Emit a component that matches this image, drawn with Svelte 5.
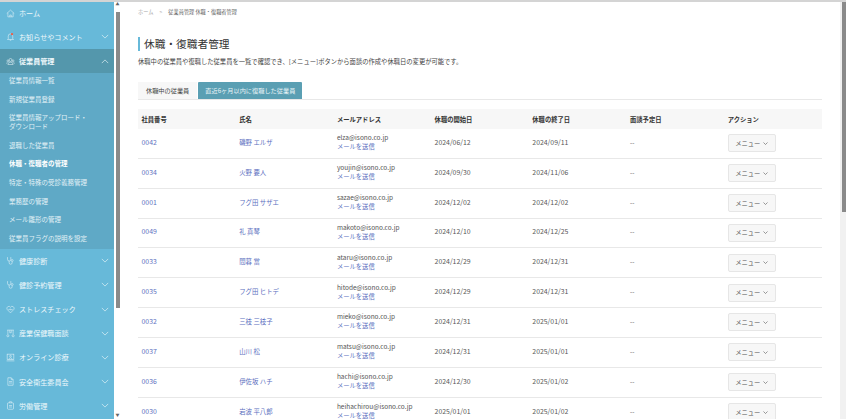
<script lang="ts">
  const topItems = [
    { label: "ホーム", icon: "home", chevron: false },
    { label: "お知らせやコメント", icon: "bell", chevron: true },
  ];
  const subItems = [
    { label: "従業員情報一覧" },
    { label: "新規従業員登録" },
    { label: "従業員情報アップロード・ダウンロード", wrap: true },
    { label: "退職した従業員" },
    { label: "休職・復職者の管理", active: true },
    { label: "特定・特殊の受診義務管理" },
    { label: "業務歴の管理" },
    { label: "メール雛形の管理" },
    { label: "従業員フラグの説明を設定" },
  ];
  const bottomItems = [
    { label: "健康診断", icon: "steth" },
    { label: "健診予約管理", icon: "steth" },
    { label: "ストレスチェック", icon: "heart" },
    { label: "産業保健職面談", icon: "people" },
    { label: "オンライン診療", icon: "screen" },
    { label: "安全衛生委員会", icon: "doc" },
    { label: "労働管理", icon: "clip" },
  ];
  const rows = [
    ["0042", "磯野 エルザ", "elza@isono.co.jp", "2024/06/12", "2024/09/11"],
    ["0034", "火野 要人", "youjin@isono.co.jp", "2024/09/30", "2024/11/06"],
    ["0001", "フグ田 サザエ", "sazae@isono.co.jp", "2024/12/02", "2024/12/02"],
    ["0049", "礼 真琴", "makoto@isono.co.jp", "2024/12/10", "2024/12/25"],
    ["0033", "間暮 當", "ataru@isono.co.jp", "2024/12/29", "2024/12/31"],
    ["0035", "フグ田 ヒトデ", "hitode@isono.co.jp", "2024/12/29", "2024/12/31"],
    ["0032", "三枝 三枝子", "mieko@isono.co.jp", "2024/12/31", "2025/01/01"],
    ["0037", "山川 松", "matsu@isono.co.jp", "2024/12/31", "2025/01/01"],
    ["0036", "伊佐坂 ハチ", "hachi@isono.co.jp", "2024/12/30", "2025/01/02"],
    ["0030", "岩波 平八郎", "heihachirou@isono.co.jp", "2025/01/01", "2025/01/02"],
  ];
  const heads = ["社員番号", "氏名", "メールアドレス", "休職の開始日", "休職の終了日", "面談予定日", "アクション"];
</script>

{#snippet icon(name)}
  <svg class="ico" viewBox="0 0 12 12" fill="none" stroke="currentColor" stroke-width="0.7">
    {#if name === "home"}
      <path d="M1 6 6 1.5 11 6M2.5 5v5.5h7V5M5 10.5V8h2v2.5" />
    {:else if name === "bell"}
      <path d="M3 9V5.5a3 3 0 0 1 6 0V9l1 1H2zM5 11h2" />
      <circle cx="8" cy="2.8" r="1.6" fill="#e8604c" stroke="none" />
    {:else if name === "group"}
      <circle cx="6" cy="4" r="2" /><circle cx="2.6" cy="5.2" r="1.3" /><circle cx="9.4" cy="5.2" r="1.3" />
      <path d="M2.5 10a3.5 3 0 0 1 7 0zM1 9a2 2 0 0 1 .8-2M11 9a2 2 0 0 0-.8-2" />
    {:else if name === "steth"}
      <path d="M2 1.5v3a2.2 2.2 0 0 0 4.4 0v-3M4.2 6.8V9a2 2 0 0 0 4 0V7.5" /><circle cx="8.2" cy="6" r="1.3" />
    {:else if name === "heart"}
      <path d="M6 10.5 1.6 6a2.6 2.6 0 0 1 4.4-3 2.6 2.6 0 0 1 4.4 3zM3.2 6h1.5l.8-1 1 2 .7-1h1.6" />
    {:else if name === "people"}
      <path d="M1.5 1.5h9M2.5 1.5V7M9.5 1.5V7M5 1.5V5h2V1.5" /><circle cx="2.5" cy="9" r="1.4" /><circle cx="9.5" cy="9" r="1.4" />
    {:else if name === "screen"}
      <rect x="1.5" y="1.5" width="9" height="7" /><circle cx="6" cy="4.3" r="1.2" /><path d="M4 8.5a2 2 0 0 1 4 0M.8 10.5h10.4" />
    {:else if name === "doc"}
      <path d="M2.5 1h4.5L9.5 3.5V11h-7zM7 1v2.5h2.5M4 6h4M4 8h4" />
    {:else}
      <rect x="2" y="2.5" width="8" height="8.5" rx="1" /><path d="M4.5 2.5V1h3v1.5M4 6h4M4 8h4" />
    {/if}
  </svg>
{/snippet}

{#snippet chev(up)}
  <svg class="chev" viewBox="0 0 10 6" fill="none" stroke="currentColor" stroke-width="0.8">
    <path d={up ? "M1 5 5 1l4 4" : "M1 1l4 4 4-4"} />
  </svg>
{/snippet}

<div class="page">
  <aside class="sidebar">
    {#each topItems as item}
      <div class="nav">
        {@render icon(item.icon)}
        <span class="nav-label">{item.label}</span>
        {#if item.chevron}{@render chev(false)}{/if}
      </div>
    {/each}
    <div class="nav open">
      {@render icon("group")}
      <span class="nav-label">従業員管理</span>
      {@render chev(true)}
    </div>
    <div class="subs">
      {#each subItems as sub}
        <div class="sub" class:wrap={sub.wrap} class:active={sub.active}>{sub.label}</div>
      {/each}
    </div>
    {#each bottomItems as item}
      <div class="nav low">
        {@render icon(item.icon)}
        <span class="nav-label">{item.label}</span>
        {@render chev(false)}
      </div>
    {/each}
  </aside>

  <div class="scrollbar side-bar">
    <span class="arrow">▲</span>
    <div class="thumb side-thumb"></div>
    <span class="arrow bottom">▼</span>
  </div>

  <main class="main">
    <nav class="crumbs">
      <span class="crumb-home">ホーム</span>
      <span class="crumb-sep">&gt;</span>
      <span>従業員管理 休職・復職者管理</span>
    </nav>
    <h1>休職・復職者管理</h1>
    <p class="lead">休職中の従業員や復職した従業員を一覧で確認でき、[メニュー]ボタンから面談の作成や休職日の変更が可能です。</p>

    <div class="tabs">
      <div class="tab">休職中の従業員</div>
      <div class="tab current">直近6ヶ月以内に復職した従業員</div>
    </div>

    <table>
      <thead>
        <tr>
          {#each heads as h}<th>{h}</th>{/each}
        </tr>
      </thead>
      <tbody>
        {#each rows as r}
          <tr>
            <td class="link num">{r[0]}</td>
            <td class="link">{r[1]}</td>
            <td class="mail">{r[2]}<br /><span class="link">メールを送信</span></td>
            <td class="num">{r[3]}</td>
            <td class="num">{r[4]}</td>
            <td>--</td>
            <td class="act"><button>メニュー <svg viewBox="0 0 10 6" fill="none" stroke="currentColor" stroke-width="1.2"><path d="M1 1l4 4 4-4" /></svg></button></td>
          </tr>
        {/each}
      </tbody>
    </table>
  </main>

  <div class="scrollbar page-bar">
    <div class="thumb page-thumb"></div>
  </div>
</div>

<style>
  :global(body) {
    margin: 0;
    background: #fff;
  }
  .page {
    display: flex;
    height: 419px;
    overflow: hidden;
    font-family: "Noto Sans CJK JP", "Liberation Sans", sans-serif;
    color: #444;
    border-top: 2px solid #d4d4d4;
    box-sizing: border-box;
  }
  .sidebar {
    width: 114px;
    flex: none;
    background: #67b9d9;
    color: #eef8fb;
    overflow: hidden;
  }
  .nav {
    height: 24.5px;
    display: flex;
    align-items: center;
    padding: 0 5px 0 5.5px;
    font-size: 7.1px;
  }
  .nav:first-child {
    height: 22.5px;
  }
  .nav.low {
    height: 24.2px;
  }
  .nav-label {
    flex: 1;
    margin-left: 4.5px;
  }
  .ico {
    width: 9px;
    height: 9px;
    flex: none;
  }
  .chev {
    width: 8px;
    height: 5px;
    flex: none;
  }
  .open {
    height: 24px;
    background: #5497ac;
    font-weight: 700;
  }
  .subs {
    background: #5fa9c6;
    padding: 0 9px;
    font-size: 6.5px;
    color: #e2f1f6;
  }
  .sub {
    height: 18.7px;
    line-height: 15.5px;
    white-space: nowrap;
  }
  .sub:last-child {
    height: 17.5px;
  }
  .sub.wrap {
    height: 27.3px;
    line-height: 9px;
    padding: 3.1px 16px 0 0;
    box-sizing: border-box;
    white-space: normal;
  }
  .sub.active {
    font-weight: 700;
    color: #fff;
  }
  .scrollbar {
    flex: none;
    background: #f1f1f1;
    position: relative;
  }
  .side-bar {
    width: 7px;
    margin-top: -2px;
    background: #fff;
    display: flex;
    flex-direction: column;
    align-items: center;
  }
  .arrow {
    font-size: 4px;
    line-height: 8px;
    height: 8px;
    color: #666;
  }
  .arrow.bottom {
    margin-top: auto;
  }
  .thumb {
    background: #8a8a8a;
  }
  .side-thumb {
    width: 4px;
    height: 296px;
    margin-top: 4px;
  }
  .page-bar {
    width: 6px;
    margin: -2px 0 0 auto;
  }
  .page-thumb {
    width: 4px;
    height: 212px;
    margin-left: 2px;
  }
  .main {
    width: 684px;
    flex: none;
    margin-left: 17px;
  }
  .crumbs {
    font-size: 5.2px;
    line-height: 8px;
    margin-top: 6px;
    color: #666;
    display: flex;
    gap: 6px;
  }
  .crumb-home,
  .crumb-sep {
    color: #aaa;
  }
  h1 {
    margin: 21px 0 0;
    padding-left: 4px;
    border-left: 2px solid #67b9d9;
    font-size: 10.7px;
    font-weight: 400;
    line-height: 14px;
    color: #333;
  }
  .lead {
    margin: 5px 0 0;
    font-size: 6.3px;
    line-height: 12px;
    color: #444;
  }
  .tabs {
    display: flex;
    margin-top: 14px;
    border-bottom: 1px solid #e8e8e8;
    font-size: 6.2px;
  }
  .tab {
    height: 17px;
    line-height: 17px;
    padding: 0 8px;
    margin-right: 1px;
    background: #f7f7f7;
    color: #444;
  }
  .tab.current {
    background: #5a9fb3;
    color: #e8f4f7;
    padding: 0 7px;
    border-radius: 1px 1px 0 0;
  }
  table {
    width: 100%;
    table-layout: fixed;
    border-collapse: separate;
    border-spacing: 0;
    margin-top: 9px;
    font-size: 6.3px;
  }
  th {
    height: 20px;
    padding: 0 3.5px;
    background: #f7f7f7;
    text-align: left;
    font-weight: 700;
    color: #333;
  }
  td {
    height: 29.85px;
    padding: 0 3.5px 2px;
    box-sizing: border-box;
    border-bottom: 1px solid #e8e8e8;
    color: #555;
    line-height: 9px;
    font-size: 6.4px;
  }
  td.num {
    font-size: 6.9px;
  }
  td.link,
  .link {
    color: #5c6fc0;
  }
  td.mail {
    font-size: 6.5px;
    white-space: nowrap;
  }
  .mail .link {
    font-size: 6.3px;
  }
  td.act {
    padding-bottom: 0;
  }
  button {
    display: flex;
    align-items: center;
    justify-content: center;
    gap: 3px;
    width: 48px;
    height: 18px;
    padding: 0;
    background: #f7f7f7;
    border: 1px solid #e6e6e6;
    border-radius: 2px;
    color: #555;
    font: inherit;
    font-size: 6.3px;
  }
  button svg {
    width: 5px;
    height: 3px;
  }
</style>
